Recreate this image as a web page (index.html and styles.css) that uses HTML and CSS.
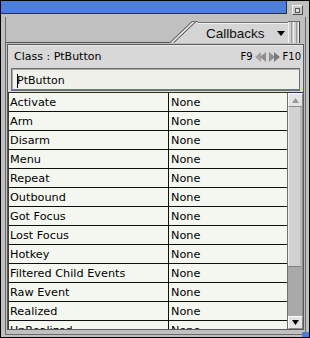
FILE: index.html
```html
<!DOCTYPE html>
<html lang="en">
<head>
    <meta charset="UTF-8">
    <title>Callbacks</title>
    <link rel="stylesheet" href="styles.css">
</head>
<body>
    <div class="window">
        <div class="titlebar">
            <div class="title-fill"></div>
            <div class="title-tools">
                <span class="title-btn"><span class="title-btn-dot"></span></span>
            </div>
        </div>
        <div class="frame">
            <div class="frame-inner">
                <div class="tabbar">
                    <div class="tabbar-line"></div>
                    <svg class="tab-slant" width="28" height="22" viewBox="0 0 28 22">
                        <polygon points="4,22 27,0 28,0 28,22" fill="#d5d5d5"/>
                        <line x1="0" y1="21.5" x2="22" y2="0.5" stroke="#505050"/>
                        <line x1="2" y1="21.5" x2="24" y2="0.5" stroke="#f4f4f4"/>
                        <line x1="4" y1="21.5" x2="26" y2="0.5" stroke="#505050"/>
                        <line x1="22" y1="0.5" x2="28" y2="0.5" stroke="#707070"/>
                    </svg>
                    <div class="tab">
                        <span class="tab-label">Callbacks</span>
                        <svg class="tab-arrow" width="8" height="5" viewBox="0 0 8 5">
                            <polygon points="0,0 8,0 4,5" fill="#000"/>
                        </svg>
                    </div>
                    <div class="tab-grip"></div>
                </div>
                <div class="panel">
                    <div class="panel-head">
                        <div class="class-row">
                            <span>Class : PtButton</span>
                            <span class="keys">
                                F9
                                <svg width="26" height="10" viewBox="0 0 26 10">
                                    <polygon points="0,5 6,0 6,10" fill="#a89ca0"/>
                                    <polygon points="5,5 11,0 11,10" fill="#8e8e8e"/>
                                    <polygon points="20,5 14,0 14,10" fill="#8e8e8e"/>
                                    <polygon points="25,5 19,0 19,10" fill="#7a7a7a"/>
                                </svg>
                                F10
                            </span>
                        </div>
                        <div class="name-field"><span class="caret"></span>PtButton</div>
                    </div>
                    <div class="list">
                        <div class="rows">
                            <div class="row"><div class="cell name">Activate</div><div class="cell value">None</div></div>
                            <div class="row"><div class="cell name">Arm</div><div class="cell value">None</div></div>
                            <div class="row"><div class="cell name">Disarm</div><div class="cell value">None</div></div>
                            <div class="row"><div class="cell name">Menu</div><div class="cell value">None</div></div>
                            <div class="row"><div class="cell name">Repeat</div><div class="cell value">None</div></div>
                            <div class="row"><div class="cell name">Outbound</div><div class="cell value">None</div></div>
                            <div class="row"><div class="cell name">Got Focus</div><div class="cell value">None</div></div>
                            <div class="row"><div class="cell name">Lost Focus</div><div class="cell value">None</div></div>
                            <div class="row"><div class="cell name">Hotkey</div><div class="cell value">None</div></div>
                            <div class="row"><div class="cell name">Filtered Child Events</div><div class="cell value">None</div></div>
                            <div class="row"><div class="cell name">Raw Event</div><div class="cell value">None</div></div>
                            <div class="row"><div class="cell name">Realized</div><div class="cell value">None</div></div>
                            <div class="row"><div class="cell name">UnRealized</div><div class="cell value">None</div></div>
                        </div>
                        <div class="scrollbar">
                            <div class="sb-btn sb-up">
                                <svg width="7" height="5" viewBox="0 0 7 5"><polygon points="3.5,0 7,5 0,5" fill="#9a9a9a"/></svg>
                            </div>
                            <div class="sb-track">
                                <div class="sb-thumb"></div>
                            </div>
                            <div class="sb-btn sb-down">
                                <svg width="7" height="5" viewBox="0 0 7 5"><polygon points="0,0 7,0 3.5,5" fill="#000"/></svg>
                            </div>
                        </div>
                    </div>
                </div>
            </div>
        </div>
        <div class="corner"></div>
    </div>
</body>
</html>
```

FILE: styles.css
```css
body {
    margin: 0;
    font-family: 'DejaVu Sans', sans-serif;
    font-size: 11px;
    color: #000;
}
.window {
    position: relative;
    width: 310px;
    height: 338px;
    box-sizing: border-box;
    border: 1px solid #000;
    background-color: #c0c0c0;
    display: flex;
    flex-direction: column;
    overflow: hidden;
}
.titlebar {
    display: flex;
    height: 13px;
    flex-shrink: 0;
}
.title-fill {
    flex: 1;
    background-color: #4c7fd9;
    border-bottom: 1px solid #303030;
    border-right: 1px solid #303030;
}
.title-tools {
    width: 22px;
    padding: 4px 0 0 5px;
    box-sizing: border-box;
}
.title-btn {
    display: flex;
    align-items: center;
    justify-content: center;
    width: 11px;
    height: 10px;
    box-sizing: border-box;
    border: 1px solid;
    border-color: #f2f2f2 #505050 #505050 #f2f2f2;
    background-color: #cacaca;
}
.title-btn-dot {
    width: 3px;
    height: 3px;
    border: 1px solid #5a5a5a;
    background-color: #e0e0e0;
}
.frame {
    flex: 1;
    display: flex;
    padding: 3px 3px 2px 4px;
    min-height: 0;
}
.frame-inner {
    flex: 1;
    display: flex;
    flex-direction: column;
    border-left: 1px solid #6a6a6a;
    border-right: 1px solid #6a6a6a;
    border-bottom: 1px solid #6a6a6a;
    min-height: 0;
}
.tabbar {
    display: flex;
    align-items: flex-end;
    height: 26px;
    flex-shrink: 0;
    padding-right: 5px;
}
.tabbar-line {
    flex: 1;
    border-bottom: 1px solid #505050;
}
.tab-slant {
    display: block;
    flex-shrink: 0;
}
.tab {
    display: flex;
    align-items: center;
    width: 90px;
    height: 21px;
    border-top: 1px solid #707070;
    background-color: #d5d5d5;
    box-shadow: inset 0 1px #f4f4f4;
    padding-left: 8px;
    box-sizing: border-box;
}
.tab-label {
    font-family: 'Liberation Sans', sans-serif;
    font-size: 13.5px;
    color: #101010;
}
.tab-arrow {
    margin-left: auto;
    margin-right: 3px;
}
.tab-grip {
    width: 11px;
    height: 21px;
    border-top: 1px solid #707070;
    border-right: 1px solid #404040;
    background: repeating-linear-gradient(90deg, #f0f0f0 0 1px, #cfcfcf 1px 3px, #9c9c9c 3px 4px, #c4c4c4 4px 5px);
}
.panel {
    flex: 1;
    display: flex;
    flex-direction: column;
    margin: 1px 1px 4px 1px;
    border: 1px solid #5a5a5a;
    min-height: 0;
}
.panel-head {
    background-color: #d8d8d8;
    padding-bottom: 1px;
    flex-shrink: 0;
}
.class-row {
    display: flex;
    align-items: center;
    justify-content: space-between;
    height: 20px;
    box-sizing: border-box;
    padding: 3px 2px 0 6px;
    box-shadow: inset 0 1px #ececec;
}
.keys {
    display: flex;
    align-items: center;
    gap: 2px;
    font-size: 10px;
}
.name-field {
    display: flex;
    align-items: center;
    height: 23px;
    box-sizing: border-box;
    margin: 3px 3px 0 3px;
    padding: 2px 0 0 5px;
    border: 1px solid #6e6e6e;
    background-color: #f1f1ec;
    box-shadow: inset 0 -1px #6a6ad8, inset 1px 1px #a8a8a8;
}
.caret {
    display: inline-block;
    width: 1px;
    height: 14px;
    background-color: #000;
    margin-right: -1px;
}
.list {
    flex: 1;
    display: flex;
    border-top: 1px solid #303030;
    min-height: 0;
    overflow: hidden;
}
.rows {
    flex: 1;
    background-color: #f4f7f0;
    border-left: 1px solid #404040;
    font-size: 11.25px;
}
.row {
    display: flex;
    height: 18px;
    border-bottom: 1px solid #101010;
}
.cell {
    line-height: 19px;
    white-space: nowrap;
    overflow: hidden;
}
.name {
    width: 160px;
    padding-left: 1px;
    box-sizing: border-box;
    border-right: 1px solid #101010;
}
.value {
    flex: 1;
    padding-left: 2px;
}
.scrollbar {
    width: 15px;
    display: flex;
    flex-direction: column;
    border-left: 1px solid #707070;
    background-color: #a9a9a9;
}
.sb-btn {
    display: flex;
    align-items: center;
    justify-content: center;
    box-sizing: border-box;
    border: 1px solid;
    border-color: #fafafa #8a8a8a #8a8a8a #fafafa;
    background-color: #e4e4e4;
}
.sb-up {
    height: 14px;
}
.sb-down {
    height: 13px;
}
.sb-track {
    flex: 1;
    display: flex;
    flex-direction: column;
    border-right: 1px solid #8a8a8a;
}
.sb-thumb {
    height: 159px;
    background-color: #d2d2d2;
    border-right: 2px solid #b8b8b8;
    border-bottom: 1px solid #808080;
    box-shadow: inset 1px 0 #eeeeee;
}
.corner {
    position: absolute;
    right: 0;
    bottom: 0;
    width: 7px;
    height: 5px;
    background-color: #4c7fd9;
}
```
